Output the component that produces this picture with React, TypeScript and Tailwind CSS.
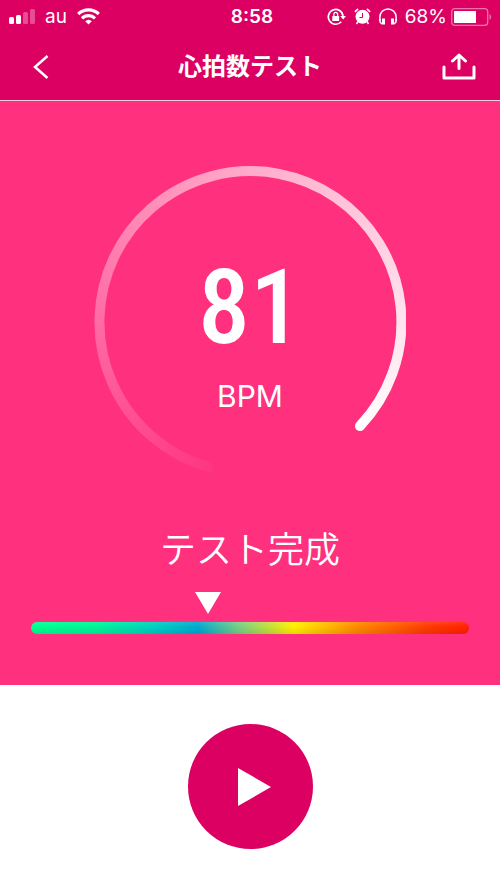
const CJK = "font-['Inter','Noto_Sans_CJK_JP',sans-serif]";

function StatusBar() {
  return (
    <div className="grid h-[33px] grid-cols-[1fr_auto_1fr] items-center px-2 text-[19px] leading-8">
      <div className="flex items-center gap-2.5">
        <svg width="27" height="17" viewBox="0 0 27 17" fill="currentColor" aria-label="Signal">
          <rect x="1" y="9" width="5" height="7" rx="1.5" />
          <rect x="8" y="7" width="5" height="9" rx="1.5" />
          <rect x="15" y="4" width="5" height="12" rx="1.5" opacity="0.3" />
          <rect x="22" y="1" width="5" height="15" rx="1.5" opacity="0.3" />
        </svg>
        <span>au</span>
        <svg width="23" height="17" viewBox="0 0 23 17" fill="none" stroke="currentColor" strokeWidth="3.2" aria-label="Wi-Fi">
          <path d="M1.2 6a14.8 14.8 0 0 1 20.6 0" />
          <path d="M5 10.3a9.3 9.3 0 0 1 13 0" />
          <path d="M8.2 13.2a4.8 4.8 0 0 1 6.6 0L11.5 16.5Z" fill="currentColor" stroke="none" />
        </svg>
      </div>
      <time className="pl-1 text-center font-semibold">8:58</time>
      <div className="flex items-center justify-end gap-2">
        <svg width="19" height="18" viewBox="0 0 18 17" fill="none" stroke="currentColor" strokeWidth="1.6" className="shrink-0" aria-label="Rotation lock">
          <path d="M15.2 7.5a7 7 0 1 0-1.7 5.5" />
          <path d="M12.5 7.5H18l-2.7 3.4Z" fill="currentColor" stroke="none" />
          <rect x="5" y="7.5" width="6.5" height="4.8" rx="0.5" fill="currentColor" stroke="none" />
          <path d="M6.5 8V6a1.8 1.8 0 0 1 3.6 0v2" strokeWidth="1.2" />
        </svg>
        <svg width="17" height="17" viewBox="0 0 17 17" className="shrink-0" aria-label="Alarm">
          <circle cx="8.5" cy="8.8" r="7" fill="currentColor" />
          <path d="M1 4A8 8 0 0 1 4.2 1M16 4A8 8 0 0 0 12.8 1" fill="none" stroke="currentColor" strokeWidth="1.6" />
          <path d="m4 13.500-1.500 2.500M13 13.500l1.500 2.500" stroke="currentColor" strokeWidth="1.5" />
          <path d="M8.500 5v4.500H5.500" fill="none" stroke="#dc0063" strokeWidth="1" />
        </svg>
        <svg width="18" height="17" viewBox="0 0 18 17" fill="none" stroke="currentColor" className="shrink-0" aria-label="Headphones">
          <path d="M.9 13V9a8.1 8.1 0 0 1 16.2 0v4" strokeWidth="1.5" />
          <path d="M4.500 10.500v6M13.500 10.500v6" strokeWidth="3" />
          <path d="M1 11v3l2 2M17 11v3l-2 2" strokeWidth="1.5" />
        </svg>
        <div className="flex items-center gap-1">
          <span>68%</span>
          <svg width="41" height="18" viewBox="0 0 41 18" className="shrink-0" aria-label="Battery">
            <rect x="0.7" y="0.7" width="36" height="16.6" rx="3" fill="none" stroke="currentColor" strokeOpacity="0.45" strokeWidth="1.3" />
            <rect x="3" y="3" width="22" height="12" rx="0.5" fill="currentColor" />
            <path d="M38.500 6a3.500 3.500 0 0 1 0 6Z" fill="currentColor" opacity="0.45" />
          </svg>
        </div>
      </div>
    </div>
  );
}

function Ring() {
  return (
    <svg viewBox="0 0 312 312" className="col-start-1 row-start-1 w-full" aria-hidden="true">
      <mask id="ring" maskUnits="userSpaceOnUse" x="0" y="0" width="312" height="312">
        <path d="M114 301A151 151 0 1 1 266 260" fill="none" stroke="white" strokeWidth="10" strokeLinecap="round" />
      </mask>
      <foreignObject width="312" height="312" mask="url(#ring)">
        <div className="size-full bg-[conic-gradient(from_190deg,#ffffff04,#ffffff98_170deg,white_304deg)]" />
      </foreignObject>
    </svg>
  );
}

export default function App() {
  return (
    <div className={`flex min-h-screen flex-col bg-white text-white ${CJK}`}>
      <header className="border-b border-white/80 bg-[#dc0063]">
        <StatusBar />
        <div className="grid h-[67px] grid-cols-[1fr_auto_1fr] items-center px-6">
          <button aria-label="戻る" className="justify-self-start px-2">
            <svg width="17" height="26" viewBox="0 0 17 26" fill="none" stroke="currentColor" strokeWidth="2.5">
              <path d="M15.500 2 3 13l12.500 11" />
            </svg>
          </button>
          <h1 className="text-2xl font-bold">心拍数テスト</h1>
          <button aria-label="共有" className="justify-self-end">
            <svg width="34" height="27" viewBox="0 0 34 27" fill="none" stroke="currentColor" strokeWidth="3" strokeLinejoin="round" strokeLinecap="round">
              <path d="M2 14v11h30V14" />
              <path d="M17 15.500V3M10.500 8 17 2l6.500 6" />
            </svg>
          </button>
        </div>
      </header>

      <main className="flex flex-col items-center bg-[#ff307e] px-[31px] pt-[65px] pb-[51px]">
        <div className="grid w-[312px] place-items-center">
          <Ring />
          <div className="col-start-1 row-start-1 pt-6 text-center">
            <div className="font-['Roboto_Condensed','Liberation_Sans_Narrow',sans-serif] text-[104px] leading-28 font-medium">81</div>
            <div className="pt-3 text-3xl leading-10">BPM</div>
          </div>
        </div>
        <h2 className="mt-[45px] font-['Noto_Sans_CJK_JP',sans-serif] text-4xl leading-12 font-[350]">テスト完成</h2>
        <div className="mt-[21px] w-full">
          <svg width="26" height="22" viewBox="0 0 26 22" fill="currentColor" className="ml-[37.5%]" aria-hidden="true">
            <path d="M0 0h26L13 22Z" />
          </svg>
          <div className="mt-2 h-3 rounded-full bg-[linear-gradient(to_bottom,#ffffff18,#00000000_40%,#00000018),linear-gradient(to_right,#00ff90,#00f598_15%,#00cfc0_28%,#00a9d0_38%,#7fd080_48%,#ffef00_60%,#ff8c00_74%,#ff3c00_90%,#ff2000)]" />
        </div>
      </main>

      <footer className="flex flex-1 items-start justify-center pt-[39px]">
        <button aria-label="再生" className="flex size-[125px] items-center justify-center rounded-full bg-[#dc0063]">
          <svg width="33" height="38" viewBox="0 0 33 38" fill="currentColor" className="ml-2">
            <path d="M0 0 33 19 0 38Z" />
          </svg>
        </button>
      </footer>
    </div>
  );
}
